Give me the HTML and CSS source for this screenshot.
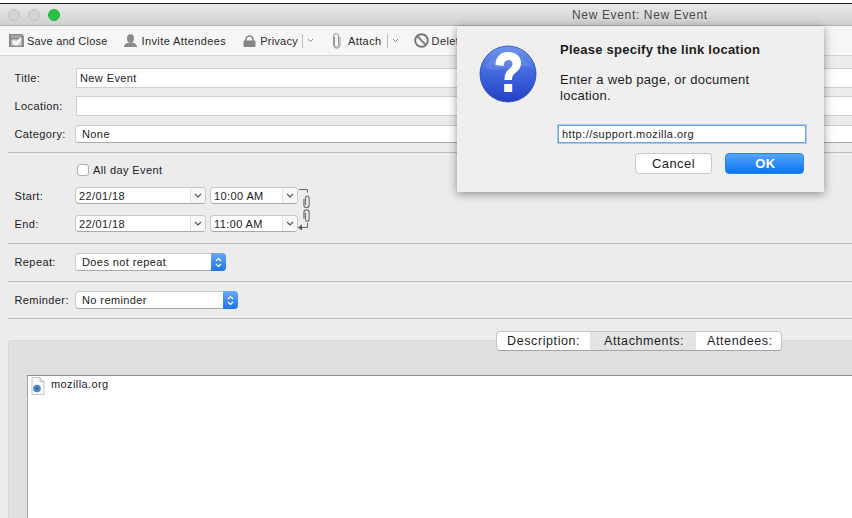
FILE: index.html
```html
<!DOCTYPE html>
<html lang="en">
<head>
<meta charset="utf-8">
<title>New Event: New Event</title>
<link rel="stylesheet" href="styles.css">
</head>
<body>
<div class="window">
  <header class="titlebar">
    <div class="lights"><i class="light"></i><i class="light"></i><i class="light green"></i></div>
    <div class="wintitle">New Event: New Event</div>
  </header>
  <nav class="toolbar">
    <span class="tool t-save">
      <svg class="ico" width="15" height="15" viewBox="0 0 15 15"><path d="M0 1h13l2 2v11H0z" fill="#8b8b8b"/><path d="M2 2h10v3H2z" fill="#a2a2a2"/><path d="M2.500 6.500h10v6h-10z" fill="#d9d9d9"/><path d="M4.500 8.500l2.500 3 5-6.500" fill="none" stroke="#fff" stroke-width="2"/></svg>Save and Close</span>
    <span class="tool t-invite">
      <svg class="ico" width="13" height="14" viewBox="0 0 13 14"><ellipse cx="6.500" cy="4.500" rx="3.500" ry="4.200" fill="#8a8a8a"/><path d="M0 13c0-3 3-4 4.500-4.500h4C10 9 13 10 13 13z" fill="#8a8a8a"/></svg>Invite Attendees</span>
    <span class="tool t-privacy">
      <svg class="ico" width="13" height="12" viewBox="0 0 13 12"><path d="M3 6V4.500a3.500 3.500 0 0 1 7 0V6" fill="none" stroke="#858585" stroke-width="1.600"/><rect x="0.500" y="5.500" width="12" height="6.500" rx="1" fill="#858585"/></svg>Privacy</span>
    <span class="menu-sep m1"><svg width="7" height="5" viewBox="0 0 7 5"><path d="M1 1l2.500 2.500L6 1" fill="none" stroke="#888" stroke-width="1"/></svg></span>
    <span class="tool t-attach">
      <svg class="ico" width="9" height="16" viewBox="0 0 9 16"><path d="M2.500 4v8a2 2 0 0 0 4 0V3a2.500 2.500 0 0 0-5 0v9.500a3.300 3.300 0 0 0 6.500 0V4" fill="none" stroke="#8c8c8c" stroke-width="0.900"/></svg>Attach</span>
    <span class="menu-sep m2"><svg width="7" height="5" viewBox="0 0 7 5"><path d="M1 1l2.500 2.500L6 1" fill="none" stroke="#888" stroke-width="1"/></svg></span>
    <span class="tool t-delete">
      <svg class="ico" width="15" height="15" viewBox="0 0 15 15"><circle cx="7.500" cy="7.500" r="6.300" fill="none" stroke="#777" stroke-width="1.900"/><path d="M3.200 3.200l8.600 8.600" stroke="#777" stroke-width="1.900"/></svg>Delete</span>
  </nav>

  <main class="form">
    <div class="row r-title"><label class="lbl">Title:</label><div class="input">New Event</div></div>
    <div class="row r-location"><label class="lbl">Location:</label><div class="input"></div></div>
    <div class="row r-category"><label class="lbl">Category:</label><div class="select wide">None</div></div>
    <hr class="rule r1">
    <div class="row r-allday"><span class="check"></span><span class="checktext">All day Event</span></div>
    <div class="row r-start">
      <label class="lbl">Start:</label>
      <div class="combo date"><span>22/01/18</span><b class="drop"><svg width="8" height="5" viewBox="0 0 8 5"><path d="M1 1l3 3 3-3" fill="none" stroke="#555" stroke-width="1.200"/></svg></b></div>
      <div class="combo time"><span>10:00 AM</span><b class="drop"><svg width="8" height="5" viewBox="0 0 8 5"><path d="M1 1l3 3 3-3" fill="none" stroke="#555" stroke-width="1.200"/></svg></b></div>
      <svg class="link" width="14" height="49" viewBox="0 0 14 49">
        <path d="M1 1.500h8.500v3" fill="none" stroke="#666" stroke-width="1"/>
        <g fill="none" stroke="#747474" stroke-width="1.200"><path d="M7.500 17v-7a1.800 1.800 0 0 1 3.600 0v7a2.600 2.600 0 0 1-5.200 0v-6"/><path d="M7.500 24.500v7a1.800 1.800 0 0 0 3.600 0v-7a2.600 2.600 0 0 0-5.200 0v6"/></g>
        <path d="M9.500 35v4.500H3" fill="none" stroke="#666" stroke-width="1"/><path d="M0 39.500l4-3v6z" fill="#555"/>
      </svg>
    </div>
    <div class="row r-end">
      <label class="lbl">End:</label>
      <div class="combo date"><span>22/01/18</span><b class="drop"><svg width="8" height="5" viewBox="0 0 8 5"><path d="M1 1l3 3 3-3" fill="none" stroke="#555" stroke-width="1.200"/></svg></b></div>
      <div class="combo time"><span>11:00 AM</span><b class="drop"><svg width="8" height="5" viewBox="0 0 8 5"><path d="M1 1l3 3 3-3" fill="none" stroke="#555" stroke-width="1.200"/></svg></b></div>
    </div>
    <hr class="rule r2">
    <div class="row r-repeat"><label class="lbl">Repeat:</label><div class="select popup w-repeat">Does not repeat<b class="stepper"><svg width="7" height="11" viewBox="0 0 7 11"><path d="M1 4l2.500-2.500L6 4M1 7l2.500 2.500L6 7" fill="none" stroke="#fff" stroke-width="1.200"/></svg></b></div></div>
    <hr class="rule r3">
    <div class="row r-reminder"><label class="lbl">Reminder:</label><div class="select popup w-reminder">No reminder<b class="stepper"><svg width="7" height="11" viewBox="0 0 7 11"><path d="M1 4l2.500-2.500L6 4M1 7l2.500 2.500L6 7" fill="none" stroke="#fff" stroke-width="1.200"/></svg></b></div></div>
    <hr class="rule r4">
  </main>

  <section class="panel">
    <div class="tabs">
      <span class="tab t1">Description:</span><span class="tab t2 active">Attachments:</span><span class="tab t3">Attendees:</span>
    </div>
    <div class="list">
      <div class="item">
        <svg width="14" height="18" viewBox="0 0 14 18"><path d="M1 .5h8l4 4v13H1z" fill="#fbfbfb" stroke="#c4c4c4"/><path d="M9 .5v4h4" fill="#e6e6e6" stroke="#c4c4c4"/><circle cx="6" cy="11.500" r="3.800" fill="#4a86c8"/><circle cx="6" cy="11.500" r="1.300" fill="#2f62a6"/></svg>
        <span>mozilla.org</span>
      </div>
    </div>
  </section>
</div>

<div class="dialog">
  <svg class="qmark" width="58" height="58" viewBox="0 0 58 58">
    <defs>
      <linearGradient id="qg" x1="0" y1="0" x2="0" y2="1"><stop offset="0" stop-color="#6f97ee"/><stop offset="0.500" stop-color="#3f66de"/><stop offset="1" stop-color="#2340c4"/></linearGradient>
    </defs>
    <circle cx="29" cy="29" r="28" fill="url(#qg)" stroke="#2b43a8" stroke-width="0.800"/>
    <path d="M6 22C14 8 44 8 52 22C40 17 18 30 6 22z" fill="#fff" opacity="0.100"/>
    <path d="M16.500 20C16.500 11 22 7 29 7C37 7 42 11 42 18C42 24 38.500 26 36 28.300C33.700 30.200 33 32 33 35H25.500C25.500 30 26.500 27 29.500 24.500C32 22.300 33.500 21.300 33.500 19C33.500 16.500 32 15 29.500 15C26.500 15 24.800 17 24.500 21z" fill="#fff"/>
    <rect x="25.200" y="39" width="8" height="8" fill="#fff"/>
  </svg>
  <div class="dlg-body">
    <h1 class="dlg-head">Please specify the link location</h1>
    <p class="dlg-text">Enter a web page, or document location.</p>
    <div class="url">http://support.mozilla.org</div>
    <div class="btns"><span class="btn">Cancel</span><span class="btn ok">OK</span></div>
  </div>
</div>
</body>
</html>
```
FILE: styles.css
```css
* { box-sizing: border-box; }
html, body { margin: 0; padding: 0; }
body {
  width: 852px; height: 518px; overflow: hidden; position: relative;
  background: #fff; color: #222;
  font-family: "Liberation Sans", Arial, sans-serif; font-size: 11px;
  letter-spacing: 0.4px;
}
.window { margin-top: 3px; height: 515px; border-top: 1px solid #1a1a1a; background: #ececec; overflow: hidden; }

.titlebar {
  height: 22px; position: relative; display: flex; align-items: center; padding-left: 8px;
  background: linear-gradient(#e9e9e9, #d0d0d0); border-bottom: 1px solid #b4b4b4;
}
.lights { display: flex; gap: 8px; }
.light { width: 12px; height: 12px; border-radius: 50%; background: #d4d4d4; border: 1px solid #c4c4c4; }
.light.green { background: #29c043; border-color: #24b23c; }
.wintitle { position: absolute; left: 572px; top: 4px; font-size: 12px; color: #4a4a4a; letter-spacing: 0.65px; }

.toolbar {
  height: 30px; display: flex; align-items: center; background: #f6f6f6; border-bottom: 1px solid #d6d6d6;
  padding-left: 9px; white-space: nowrap; color: #2a2a2a;
}
.tool { display: inline-flex; align-items: center; }
.ico { margin-right: 3px; flex: none; }
.t-save { letter-spacing: 0.2px; }
.t-invite { margin-left: 17px; }
.t-privacy { margin-left: 17px; letter-spacing: 0.25px; }
.t-attach { margin-left: 18px; }
.t-delete { margin-left: 15px; }
.t-invite .ico { margin-right: 4px; }
.t-privacy .ico { margin-right: 4px; }
.t-attach .ico { margin-right: 7px; }
.menu-sep { display: inline-flex; align-items: center; margin-left: 4px; height: 14px; border-left: 1px solid #bdbdbd; padding-left: 4px; }
.m2 { margin-left: 5px; }

.form { padding-left: 14px; }
.row { display: flex; align-items: center; }
.lbl { width: 61px; flex: none; padding-left: 0.5px; }
.input { width: 800px; flex: none; height: 20px; line-height: 18px; padding-left: 3px; background: #fff; border: 1px solid #cfcfcf; margin-left: 1px; }
.select {
  height: 18px; line-height: 16px; padding-left: 6px; background: #fff; border: 1px solid #cacaca; border-bottom-color: #a8a8a8; border-radius: 4px;
  position: relative; flex: none;
}
.wide { width: 800px; }
.r-title { margin-top: 12px; }
.r-location { margin-top: 8px; }
.r-category { margin-top: 9px; }
.rule { border: 0; border-top: 1px solid #bcbcbc; height: 0; margin: 0 0 0 -6px; }
.r1 { margin-top: 9px; }
.r-allday { margin-top: 11px; padding-left: 63px; }
.check { width: 12px; height: 12px; border: 1px solid #b0b0b0; border-radius: 3px; background: #fff; margin-right: 4px; }
.r-start { margin-top: 11px; position: relative; }
.r-end { margin-top: 11px; }
.combo {
  height: 17px; display: flex; align-items: center; justify-content: space-between; background: #fff; border: 1px solid #c8c8c8;
  border-bottom-color: #aaa; border-radius: 4px; padding-left: 3px; flex: none; overflow: hidden;
}
.date { width: 131px; margin-right: 4px; }
.drop { width: 15px; height: 100%; display: flex; align-items: center; justify-content: center; border-left: 1px solid #e2e2e2; background: #f7f7f7; }
.time { width: 88px; }
.link { position: absolute; left: 284px; top: 1px; }
.r2 { margin-top: 11px; }
.r-repeat { margin-top: 9px; }
.popup { padding-right: 14px; }
.w-repeat { width: 151px; }
.w-reminder { width: 163px; }
.stepper {
  position: absolute; right: -1px; top: -1px; width: 15px; height: 18px; display: flex; align-items: center; justify-content: center;
  background: linear-gradient(#68a9f5, #1c74ec); border-radius: 0 4px 4px 0;
}
.r3 { margin-top: 10px; }
.r-reminder { margin-top: 9px; }
.r4 { margin-top: 9px; }

.panel {
  margin: 21px 0 0 8px; background: #e0e0e0; border: 1px solid #d8d8d8; border-right: 0; border-radius: 4px 0 0 0;
  height: 200px; position: relative; padding: 34px 0 0 18px;
}
.tabs {
  position: absolute; left: 487px; top: -10px; display: flex; height: 20px; background: #fff; border: 1px solid #c4c4c4; border-bottom-color: #a4a4a4;
  border-radius: 4px; overflow: hidden; font-size: 12.5px; letter-spacing: 0.6px; color: #1f1f1f; line-height: 18px;
}
.tab { padding: 0 0 0 10px; white-space: nowrap; }
.t1 { width: 93px; }
.t2 { width: 106px; padding-left: 14px; }
.t3 { width: 85px; padding-left: 11px; }
.tab.active { background: #e4e4e4; }
.list { background: #fff; border-top: 1px solid #8e8e8e; border-left: 1px solid #a8a8a8; height: 160px; }
.item { display: flex; align-items: flex-start; padding: 1px 0 0 3px; color: #1c1c2c; }
.item span { margin-left: 6px; margin-top: 1px; }

.dialog {
  position: absolute; left: 457px; top: 26px; width: 367px; height: 166px; background: #efefef;
  box-shadow: 0 2px 9px rgba(0,0,0,.4); padding: 19px 0 0 22px; display: flex; color: #1d1d1d;
}
.qmark { flex: none; margin-right: 23px; }
.dlg-body { flex: 1; }
.dlg-head { margin: -3px 0 0; font-size: 13px; font-weight: bold; line-height: 16px; letter-spacing: 0.25px; }
.dlg-text { margin: 14px 0 0; width: 220px; font-size: 13px; line-height: 16px; letter-spacing: 0.28px; }
.url {
  margin: 21px 0 0 -2px; width: 248px; height: 18px; line-height: 16px; background: #fff; padding-left: 3px;
  border: 1px solid #6fa5e6; box-shadow: 0 0 0 1px #a9c9ef; letter-spacing: 0.45px;
}
.btns { display: flex; margin-top: 10px; margin-left: 75px; gap: 13px; }
.btn {
  width: 77px; height: 21px; line-height: 19px; text-align: center; font-size: 13px; background: #fff;
  border: 1px solid #c8c8c8; border-radius: 4px;
}
.btn.ok { width: 79px; background: linear-gradient(#55a5fb, #0a72f0); color: #fff; border-color: #2b83ee; font-weight: bold; font-size: 13px; padding-left: 2px; }
```
